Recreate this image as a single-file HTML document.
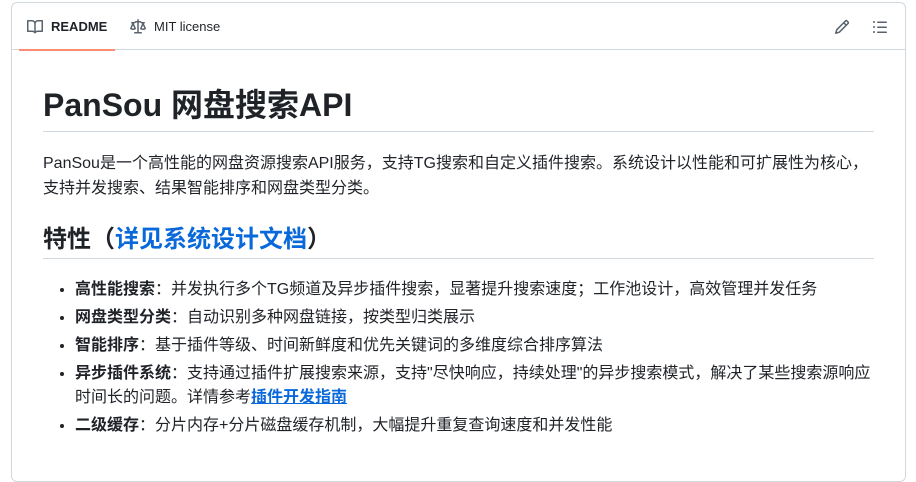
<!DOCTYPE html>
<html><head><meta charset="utf-8"><style>
*{box-sizing:border-box}
body{margin:0;background:#fff;font-family:"Liberation Sans","Noto Sans CJK SC",sans-serif;color:#1f2328;width:916px;height:462px;overflow:hidden;position:relative}
.box{position:absolute;left:11px;top:2px;width:895px;height:480px;border:1px solid #d1d9e0;border-radius:6px}
.tabs{height:47px;border-bottom:1px solid #d1d9e0;position:relative}
.tab{position:absolute;top:0;height:47px;display:flex;align-items:center;font-size:13px;gap:8px}
.t1{left:7px;padding:0 8px;font-weight:bold}
.t1:after{content:"";position:absolute;left:0;right:0;bottom:-1px;height:2px;background:#fd8c73}
.t2{left:110px;padding:0 8px}
svg{fill:#59636e}
h1{position:absolute;left:31px;top:80px;margin:0;font-size:32px;font-weight:600;line-height:44px;width:831px;border-bottom:1px solid #d1d9e0;height:49px}
p{position:absolute;left:31px;top:148px;margin:0;font-size:16px;line-height:25px;width:840px}
h2{position:absolute;left:31px;top:219px;margin:0;font-size:24px;font-weight:600;line-height:36px;width:831px;border-bottom:1px solid #d1d9e0;height:37px}
a{color:#0969da;text-decoration:none}
ul{position:absolute;left:31px;top:271px;margin:0;padding-left:32px;font-size:16px;line-height:24px;width:830px}
li{margin-top:4px}
li b{font-weight:600}
</style></head><body>
<div class="box">
<div class="tabs">
<div class="tab t1"><svg width="16" height="16" viewBox="0 0 16 16"><path d="M0 1.75A.75.75 0 0 1 .75 1h4.253c1.227 0 2.317.59 3 1.501A3.743 3.743 0 0 1 11.006 1h4.245a.75.75 0 0 1 .75.75v10.5a.75.75 0 0 1-.75.75h-4.507a2.25 2.25 0 0 0-1.591.659l-.622.621a.75.75 0 0 1-1.060 0l-.622-.621A2.25 2.25 0 0 0 5.258 13H.75a.75.75 0 0 1-.75-.75Zm7.251 10.324.004-5.073-.002-2.253A2.25 2.250 0 0 0 5.003 2.5H1.5v9h3.757a3.75 3.75 0 0 1 1.994.574ZM8.755 4.75l-.004 7.322a3.752 3.752 0 0 1 1.992-.572H14.5v-9h-3.495a2.25 2.25 0 0 0-2.25 2.25Z"/></svg>README</div>
<div class="tab t2"><svg width="16" height="16" viewBox="0 0 16 16"><path d="M8.75.75V2h.985c.304 0 .603.08.867.231l1.29.736c.038.022.08.033.124.033h2.234a.75.75 0 0 1 0 1.5h-.427l2.111 4.692a.75.75 0 0 1-.154.838c-.21.176-.441.327-.686.45C14.556 10.780 13.880 11 13 11a4.498 4.498 0 0 1-2.023-.454 3.544 3.544 0 0 1-.686-.45.75.75 0 0 1-.154-.838L12.178 4.5h-.162c-.305 0-.604-.079-.868-.231l-1.290-.736a.245.245 0 0 0-.124-.033H8.75V13h2.5a.75.75 0 0 1 0 1.5h-6.5a.75.75 0 0 1 0-1.5h2.5V3.5h-.984a.245.245 0 0 0-.124.033l-1.289.737c-.265.15-.564.23-.869.23h-.162l2.112 4.692a.75.75 0 0 1-.154.838c-.21.176-.441.327-.686.45C4.556 10.780 3.880 11 3 11a4.498 4.498 0 0 1-2.023-.454 3.544 3.544 0 0 1-.686-.45.75.75 0 0 1-.154-.838L2.178 4.5H1.75a.75.75 0 0 1 0-1.5h2.234a.249.249 0 0 0 .125-.033l1.288-.737c.265-.15.564-.23.869-.23h.984V.75a.75.75 0 0 1 1.5 0Zm2.945 8.477c.285.135.718.273 1.305.273s1.020-.138 1.305-.273L13 6.327Zm-10 0c.285.135.718.273 1.305.273s1.020-.138 1.305-.273L3 6.327Z"/></svg>MIT license</div>
<svg style="position:absolute;left:822px;top:16px" width="16" height="16" viewBox="0 0 16 16"><path d="M11.013 1.427a1.75 1.75 0 0 1 2.474 0l1.086 1.086a1.75 1.75 0 0 1 0 2.474l-8.61 8.61c-.21.21-.47.364-.756.445l-3.251.93a.75.75 0 0 1-.927-.928l.929-3.25c.081-.286.235-.547.445-.758l8.61-8.61Zm.176 4.823L9.75 4.81l-6.286 6.287a.253.253 0 0 0-.064.108l-.558 1.953 1.953-.558a.253.253 0 0 0 .108-.064Zm1.238-3.763a.25.25 0 0 0-.354 0L10.811 3.75l1.439 1.44 1.263-1.263a.25.25 0 0 0 0-.354Z"/></svg>
<svg style="position:absolute;left:860px;top:16px" width="16" height="16" viewBox="0 0 16 16"><path d="M5.75 2.5h8.5a.75.75 0 0 1 0 1.5h-8.5a.75.75 0 0 1 0-1.5Zm0 5h8.5a.75.75 0 0 1 0 1.5h-8.5a.75.75 0 0 1 0-1.5Zm0 5h8.5a.75.75 0 0 1 0 1.5h-8.5a.75.75 0 0 1 0-1.5ZM2 14a1 1 0 1 1 0-2 1 1 0 0 1 0 2Zm1-6a1 1 0 1 1-2 0 1 1 0 0 1 2 0ZM2 4a1 1 0 1 1 0-2 1 1 0 0 1 0 2Z"/></svg>
</div>
<h1>PanSou 网盘搜索API</h1>
<p>PanSou是一个高性能的网盘资源搜索API服务，支持TG搜索和自定义插件搜索。系统设计以性能和可扩展性为核心，支持并发搜索、结果智能排序和网盘类型分类。</p>
<h2>特性（<a href="#">详见系统设计文档</a>）</h2>
<ul>
<li><b>高性能搜索</b>：并发执行多个TG频道及异步插件搜索，显著提升搜索速度；工作池设计，高效管理并发任务</li>
<li><b>网盘类型分类</b>：自动识别多种网盘链接，按类型归类展示</li>
<li><b>智能排序</b>：基于插件等级、时间新鲜度和优先关键词的多维度综合排序算法</li>
<li><b>异步插件系统</b>：支持通过插件扩展搜索来源，支持"尽快响应，持续处理"的异步搜索模式，解决了某些搜索源响应时间长的问题。详情参考<a href="#" style="text-decoration:underline;font-weight:600">插件开发指南</a></li>
<li><b>二级缓存</b>：分片内存+分片磁盘缓存机制，大幅提升重复查询速度和并发性能</li>
</ul>
</div>
</body></html>
